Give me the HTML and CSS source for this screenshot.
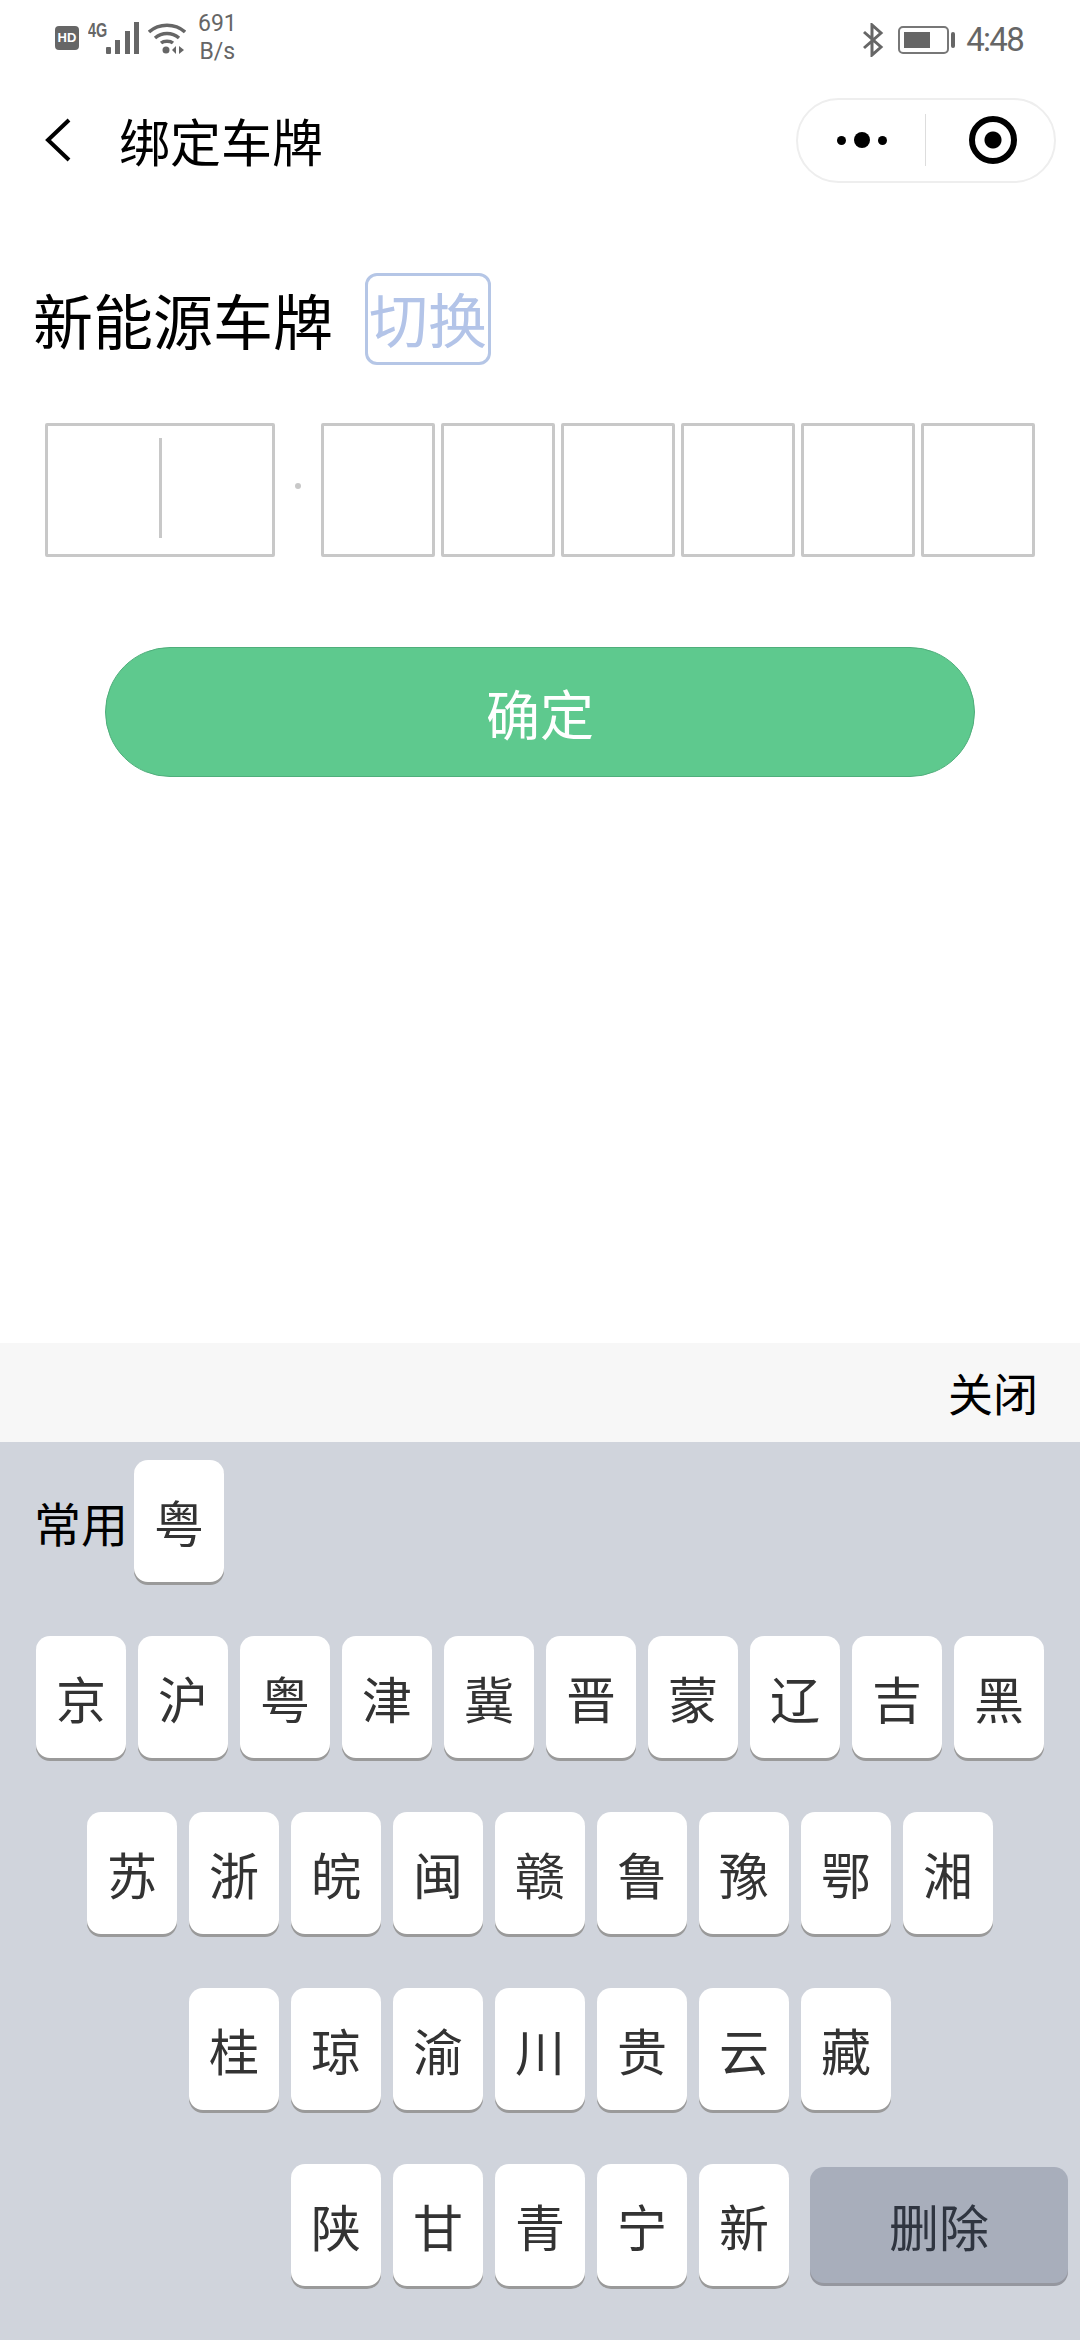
FILE: index.html
```html
<!DOCTYPE html>
<html lang="zh-CN">
<head>
    <meta charset="UTF-8">
    <meta name="viewport" content="width=device-width, initial-scale=1.0">
    <title>绑定车牌</title>
    <link rel="stylesheet" href="styles.css">
</head>
<body>
    <div class="page">
        <div class="status-bar">
            <div class="status-left">
                <span class="hd-badge">HD</span>
                <span class="net-type">4G</span>
                <svg class="signal" width="34" height="32" viewBox="0 0 34 32">
                    <rect x="0" y="25" width="5" height="7" rx="1"/>
                    <rect x="9" y="18" width="5" height="14"/>
                    <rect x="19" y="9" width="5" height="23"/>
                    <rect x="28" y="0" width="5" height="32"/>
                </svg>
                <svg class="wifi" width="38" height="32" viewBox="0 0 38 32">
                    <path d="M1 10C11 1 27 1 37 10M7 16C14 10 24 10 31 16M13 21C16 18.500 22 18.500 25 21" fill="none" stroke="#666" stroke-width="3.500"/>
                    <circle cx="18" cy="28" r="3.500" fill="#666"/>
                    <path d="M28 24V32L24 28ZM31 24V32L36 28Z" fill="#666"/>
                </svg>
                <div class="net-speed">691<br>B/s</div>
            </div>
            <div class="status-right">
                <svg class="bluetooth" width="22" height="34" viewBox="0 0 22 34">
                    <path d="M2 9L19 24L10 32V2L19 10L2 25" fill="none" stroke="#666" stroke-width="3"/>
                </svg>
                <div class="battery"><div class="battery-level"></div></div>
                <div class="battery-nub"></div>
                <span class="clock">4:48</span>
            </div>
        </div>

        <div class="nav-bar">
            <svg class="back" width="26" height="44" viewBox="0 0 26 44">
                <path d="M24 2L3 22L24 42" fill="none" stroke="#000" stroke-width="4"/>
            </svg>
            <span class="nav-title">绑定车牌</span>
            <div class="capsule">
                <div class="capsule-more">
                    <i class="dot"></i><i class="dot dot-big"></i><i class="dot"></i>
                </div>
                <div class="capsule-close"><i class="target"></i></div>
            </div>
        </div>

        <div class="title-row">
            <span class="plate-title">新能源车牌</span>
            <span class="switch-btn">切换</span>
        </div>

        <div class="plate-row">
            <div class="plate-box plate-first"><i class="caret"></i></div>
            <i class="plate-dot"></i>
            <div class="plate-box"></div>
            <div class="plate-box"></div>
            <div class="plate-box"></div>
            <div class="plate-box"></div>
            <div class="plate-box"></div>
            <div class="plate-box"></div>
        </div>

        <button class="confirm-btn" type="button">确定</button>

        <div class="keyboard-wrap">
            <div class="keyboard-top"><span>关闭</span></div>
            <div class="keyboard">
                <div class="key-row key-row-common">
                    <span class="common-label">常用</span>
                    <div class="key">粤</div>
                </div>
                <div class="key-row">
                    <div class="key">京</div>
                    <div class="key">沪</div>
                    <div class="key">粤</div>
                    <div class="key">津</div>
                    <div class="key">冀</div>
                    <div class="key">晋</div>
                    <div class="key">蒙</div>
                    <div class="key">辽</div>
                    <div class="key">吉</div>
                    <div class="key">黑</div>
                </div>
                <div class="key-row">
                    <div class="key">苏</div>
                    <div class="key">浙</div>
                    <div class="key">皖</div>
                    <div class="key">闽</div>
                    <div class="key">赣</div>
                    <div class="key">鲁</div>
                    <div class="key">豫</div>
                    <div class="key">鄂</div>
                    <div class="key">湘</div>
                </div>
                <div class="key-row">
                    <div class="key">桂</div>
                    <div class="key">琼</div>
                    <div class="key">渝</div>
                    <div class="key">川</div>
                    <div class="key">贵</div>
                    <div class="key">云</div>
                    <div class="key">藏</div>
                </div>
                <div class="key-row key-row-last">
                    <div class="key">陕</div>
                    <div class="key">甘</div>
                    <div class="key">青</div>
                    <div class="key">宁</div>
                    <div class="key">新</div>
                    <div class="key key-delete">删除</div>
                </div>
            </div>
        </div>
    </div>
</body>
</html>
```

FILE: styles.css
```css
* {
    box-sizing: border-box;
}

body {
    margin: 0;
    background-color: #ffffff;
    color: #000;
    font-family: "Noto Sans CJK SC", "Noto Sans", sans-serif;
}

.page {
    width: 1080px;
    height: 2340px;
    display: flex;
    flex-direction: column;
    overflow: hidden;
}

/* status bar */
.status-bar {
    height: 80px;
    display: flex;
    justify-content: space-between;
    align-items: center;
    padding: 0 57px 0 55px;
    color: #666;
}

.status-left,
.status-right {
    display: flex;
    align-items: center;
}

.status-left {
    margin-bottom: 4px;
}

.hd-badge {
    width: 24px;
    height: 24px;
    border-radius: 4px;
    background-color: #666;
    color: #fff;
    font: bold 13px/24px "Liberation Sans", sans-serif;
    text-align: center;
}

.net-type {
    width: 18px;
    margin: 0 0 16px 9px;
    font: bold 20px/18px "Liberation Sans", sans-serif;
    transform: scaleX(0.72);
    transform-origin: left center;
}

.signal {
    fill: #666;
}

.wifi {
    margin-left: 8px;
}

.net-speed {
    margin-left: 12px;
    font: 23px/28px Roboto, sans-serif;
    text-align: center;
}

.bluetooth {
    margin-right: 14px;
}

.battery {
    width: 51px;
    height: 28px;
    padding: 4px;
    border: 2px solid #777;
    border-radius: 5px;
}

.battery-level {
    width: 26px;
    height: 100%;
    background-color: #666;
}

.battery-nub {
    width: 4px;
    height: 16px;
    margin: 0 11px 0 2px;
    border-radius: 2px;
    background-color: #666;
}

.clock {
    font: 33px/40px Roboto, sans-serif;
    letter-spacing: -1.7px;
}

/* nav bar */
.nav-bar {
    height: 120px;
    display: flex;
    align-items: center;
    padding: 0 24px 0 45px;
}

.nav-title {
    margin-left: 48px;
    font-size: 51px;
    line-height: 60px;
}

.capsule {
    width: 260px;
    height: 85px;
    margin-left: auto;
    display: flex;
    align-items: center;
    border: 2px solid #eeeeee;
    border-radius: 43px;
}

.capsule-more {
    width: 128px;
    height: 52px;
    display: flex;
    align-items: center;
    justify-content: center;
    gap: 8px;
    border-right: 1px solid #dddddd;
}

.dot {
    width: 9px;
    height: 9px;
    border-radius: 50%;
    background-color: #000;
}

.dot-big {
    width: 16px;
    height: 16px;
}

.capsule-close {
    flex: 1;
    padding-left: 6px;
    display: flex;
    justify-content: center;
}

.target {
    width: 48px;
    height: 48px;
    border: 6px solid #000;
    border-radius: 50%;
    background: radial-gradient(circle, #000 0 8px, #fff 9px);
}

/* plate form */
.title-row {
    margin: 73px 0 0 33px;
    display: flex;
    align-items: center;
}

.plate-title {
    font-size: 60px;
    line-height: 92px;
}

.switch-btn {
    width: 126px;
    height: 92px;
    margin-left: 32px;
    border: 3px solid #b5c6e6;
    border-radius: 12px;
    color: #b3c4e8;
    font-size: 59px;
    line-height: 84px;
    text-align: center;
}

.plate-row {
    margin: 58px 0 0 45px;
    display: flex;
    align-items: center;
    gap: 6px;
}

.plate-box {
    width: 114px;
    height: 134px;
    border: 3px solid #c8c8c8;
    border-radius: 2px;
}

.plate-first {
    width: 230px;
    display: flex;
    align-items: center;
    justify-content: center;
}

.caret {
    width: 3px;
    height: 100px;
    margin-bottom: 4px;
    background-color: #c8c8c8;
}

.plate-dot {
    width: 6px;
    height: 6px;
    margin: 0 14px 8px;
    border-radius: 50%;
    background-color: #c8c8c8;
}

.confirm-btn {
    width: 870px;
    height: 130px;
    margin: 90px 0 0 105px;
    padding: 0;
    border: 1px solid #4fae7b;
    border-radius: 65px;
    background-color: #5ec98e;
    color: #fff;
    font-family: inherit;
    font-size: 54px;
}

/* keyboard */
.keyboard-wrap {
    margin-top: auto;
}

.keyboard-top {
    height: 99px;
    padding: 0 42px 0 0;
    display: flex;
    align-items: center;
    justify-content: flex-end;
    background-color: #f7f7f7;
    font-size: 45px;
}

.keyboard {
    height: 898px;
    padding-top: 18px;
    display: flex;
    flex-direction: column;
    gap: 54px;
    background-color: #d0d4dc;
}

.key-row {
    display: flex;
    justify-content: center;
    align-items: center;
    gap: 12px;
}

.key-row-common {
    justify-content: flex-start;
    padding-left: 34px;
}

.key-row-last {
    justify-content: flex-start;
    padding-left: 291px;
}

.common-label {
    width: 88px;
    white-space: nowrap;
    font-size: 47px;
}

.key {
    width: 90px;
    height: 122px;
    border-radius: 14px;
    background-color: #fff;
    box-shadow: 0 3px 0 #9a9a9a;
    color: #333;
    font-size: 50px;
    line-height: 122px;
    text-align: center;
}

.key-delete {
    width: 258px;
    height: 116px;
    margin-left: 9px;
    background-color: #a8aebb;
    box-shadow: 0 3px 0 #95979f;
    color: #2f3540;
    font-size: 50px;
    line-height: 116px;
}
```
